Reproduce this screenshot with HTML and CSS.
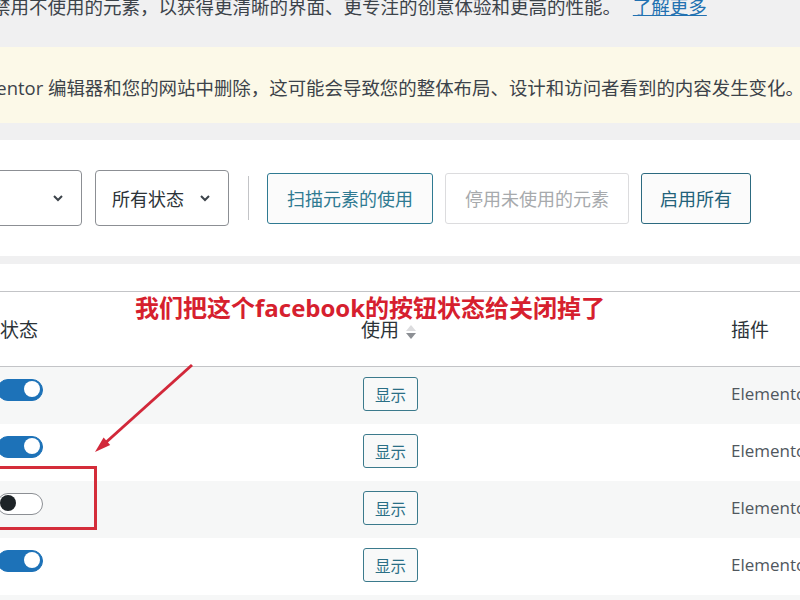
FILE: index.html
```html
<!DOCTYPE html>
<html lang="zh-CN">
  <head>
    <meta charset="UTF-8">
    <title>元素管理器</title>
    <link rel="stylesheet" href="styles.css">
  </head>
  <body>
    <p class="intro">禁用不使用的元素，以获得更清晰的界面、更专注的创意体验和更高的性能。 <a href="#">了解更多</a></p>

    <div class="notice">
      <p>Elementor 编辑器和您的网站中删除，这可能会导致您的整体布局、设计和访问者看到的内容发生变化。</p>
    </div>

    <!-- filters and bulk actions -->
    <div class="toolbar">
      <div class="select select-type">
        <span>所有插件</span>
        <svg class="chev" width="12" height="8" viewBox="0 0 12 8"><path d="M2 2l4 4 4-4" fill="none" stroke="#3c434a" stroke-width="2"/></svg>
      </div>
      <div class="select">
        <span>所有状态</span>
        <svg class="chev" width="12" height="8" viewBox="0 0 12 8"><path d="M2 2l4 4 4-4" fill="none" stroke="#3c434a" stroke-width="2"/></svg>
      </div>
      <div class="sep"></div>
      <button class="btn">扫描元素的使用</button>
      <button class="btn" disabled>停用未使用的元素</button>
      <button class="btn btn-dark">启用所有</button>
    </div>

    <div class="table-wrap">
      <table class="elements">
        <colgroup>
          <col class="col-status">
          <col class="col-usage">
          <col class="col-plugin">
        </colgroup>
        <thead>
          <tr>
            <th>状态</th>
            <th>使用 <span class="sort"><i class="up"></i><i class="down"></i></span></th>
            <th>插件</th>
          </tr>
        </thead>
        <tbody>
          <tr>
            <td class="status"><span class="toggle on"></span></td>
            <td class="usage"><button class="show-btn">显示</button></td>
            <td class="plugin">Elementor</td>
          </tr>
          <tr>
            <td class="status"><span class="toggle on"></span></td>
            <td class="usage"><button class="show-btn">显示</button></td>
            <td class="plugin">Elementor</td>
          </tr>
          <tr>
            <td class="status"><span class="toggle"></span></td>
            <td class="usage"><button class="show-btn">显示</button></td>
            <td class="plugin">Elementor</td>
          </tr>
          <tr>
            <td class="status"><span class="toggle on"></span></td>
            <td class="usage"><button class="show-btn">显示</button></td>
            <td class="plugin">Elementor</td>
          </tr>
          <tr>
            <td class="status"><span class="toggle on"></span></td>
            <td class="usage"><button class="show-btn">显示</button></td>
            <td class="plugin">Elementor</td>
          </tr>
        </tbody>
      </table>
    </div>

    <!-- red markup drawn over the table -->
    <div class="note-text">我们把这个facebook的按钮状态给关闭掉了</div>
    <svg class="note-arrow" width="800" height="600" viewBox="0 0 800 600">
      <line x1="192" y1="365" x2="103" y2="445" stroke="#d2283a" stroke-width="3"/>
      <polygon points="95,452 103.6,437.6 110.2,445" fill="#d2283a"/>
    </svg>
    <div class="note-box"></div>
  </body>
</html>
```

FILE: styles.css
```css
/* Page base */
body {
  margin: 0;
  width: 800px;
  height: 600px;
  overflow: hidden;
  position: relative;
  background-color: #f0f0f1;
  color: #3c434a;
  font-family: "Open Sans", "Noto Sans CJK SC", sans-serif;
}

/* Intro line */
.intro {
  margin: -5px 0 0 -8px;
  font-size: 18.5px;
  line-height: 24px;
  white-space: nowrap;
  color: #3c434a;
}

.intro a {
  margin-left: 7px;
  color: #2271b1;
  text-decoration: underline;
}

/* Warning notice */
.notice {
  margin-top: 28px;
  background-color: #fcf9e8;
  padding: 28px 0 22px;
}

.notice p {
  margin: 0 0 0 -46px;
  font-size: 18.45px;
  line-height: 26px;
  white-space: nowrap;
  color: #3c434a;
}

/* Toolbar panel */
.toolbar {
  margin-top: 17px;
  height: 116px;
  background-color: #fff;
  display: flex;
  align-items: center;
}

.select {
  height: 56px;
  box-sizing: border-box;
  border: 1px solid #8c8f94;
  border-radius: 4px;
  background: #fff;
  display: flex;
  align-items: center;
  justify-content: space-between;
  padding: 0 17px 0 16px;
  font-size: 18px;
  color: #2c3338;
  width: 134px;
  margin-left: 13px;
}

.select-type {
  width: 160px;
  margin-left: -78px;
  padding-right: 17px;
}

.select-type span {
  visibility: hidden;
}

.chev {
  flex: none;
}

.sep {
  width: 1px;
  height: 44px;
  background-color: #c3c4c7;
  margin: 0 18px 0 19px;
}

.btn {
  height: 51px;
  box-sizing: border-box;
  border: 1.5px solid #2f7a92;
  border-radius: 3px;
  background-color: #fbfbfb;
  color: #2f7a92;
  font-family: "Open Sans", "Noto Sans CJK SC", sans-serif;
  font-size: 18px;
  padding: 0 19px;
  margin-right: 12px;
}

.btn:disabled {
  border-color: #dcdcde;
  color: #a7aaad;
  background-color: #fff;
}

.btn-dark {
  border-color: #2c6a80;
  color: #23627a;
  padding: 0 18px;
}

/* Elements table */
.table-wrap {
  margin-top: 8px;
  background-color: #fff;
  padding-top: 27px;
}

.elements {
  margin-left: -10px;
  width: 990px;
  table-layout: fixed;
  border-collapse: collapse;
}

.col-status { width: 361px; }
.col-usage { width: 370px; }
.col-plugin { width: 259px; }

.elements th {
  height: 74px;
  text-align: left;
  font-weight: normal;
  font-size: 19px;
  color: #2c3338;
  padding: 0 0 0 10px;
  border-top: 1px solid #c3c4c7;
  border-bottom: 1px solid #c3c4c7;
}

.sort {
  display: inline-flex;
  flex-direction: column;
  gap: 2px;
  vertical-align: middle;
  margin-left: 2px;
}

.sort i {
  width: 0;
  height: 0;
  border-left: 5px solid transparent;
  border-right: 5px solid transparent;
}

.sort .up {
  border-bottom: 6px solid #dcdcde;
}

.sort .down {
  border-top: 6px solid #8c8f94;
}

.elements td {
  height: 57px;
  padding: 0 0 0 10px;
  vertical-align: middle;
}

.elements tbody tr:nth-child(odd) {
  background-color: #f6f7f7;
}

.elements td.status {
  padding-left: 7px;
}

.elements td.usage {
  padding-left: 12px;
}

.elements td.plugin {
  height: 53px;
  font-size: 17px;
  color: #50575e;
  padding-bottom: 4px;
}

/* Toggle switch */
.toggle {
  display: block;
  width: 46px;
  height: 22px;
  box-sizing: border-box;
  border-radius: 11px;
  border: 1.5px solid #8c8f94;
  background: #fff;
  position: relative;
  margin-bottom: 12px;
}

.toggle::after {
  content: "";
  position: absolute;
  top: 1.5px;
  left: 2px;
  width: 16px;
  height: 16px;
  border-radius: 50%;
  background-color: #1d2327;
}

.toggle.on {
  background-color: #1d72b8;
  border-color: #1d72b8;
}

.toggle.on::after {
  left: auto;
  right: 2px;
  background-color: #fff;
}

/* Show button in usage column */
.show-btn {
  width: 55px;
  height: 34px;
  box-sizing: border-box;
  border: 1.5px solid #3b7a8c;
  border-radius: 3px;
  background-color: #f8f9f9;
  color: #2a6f86;
  font-family: "Noto Sans CJK SC", sans-serif;
  font-size: 15.5px;
  padding: 0;
  margin-bottom: 4px;
}

/* Annotations */
.note-text {
  position: absolute;
  left: 135px;
  top: 294px;
  font-size: 24px;
  line-height: 28px;
  font-weight: bold;
  color: #d6202e;
  white-space: nowrap;
}

.note-arrow {
  position: absolute;
  left: 0;
  top: 0;
}

.note-box {
  position: absolute;
  left: -5px;
  top: 466px;
  width: 102px;
  height: 64px;
  box-sizing: border-box;
  border: 3px solid #d42d3a;
}
```
